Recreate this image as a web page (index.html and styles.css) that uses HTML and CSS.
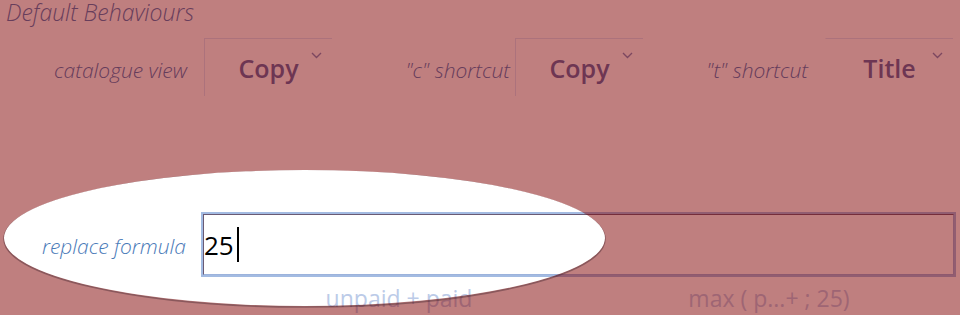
FILE: index.html
```html
<!DOCTYPE html>
<html lang="en">
<head>
<meta charset="utf-8">
<title>Default Behaviours</title>
<link rel="stylesheet" href="styles.css">
</head>
<body>
<div class="page">
  <h2 class="section-title">Default Behaviours</h2>

  <div class="defaults">
    <label class="lbl">catalogue view</label>
    <div class="select">
      <span class="value">Copy</span>
      <svg class="chev" width="11" height="7" viewBox="0 0 11 7"><path d="M1 1l4.5 4.5L10 1" fill="none" stroke="currentColor" stroke-width="1.4"/></svg>
    </div>
    <label class="lbl lbl-tight">"c" shortcut</label>
    <div class="select">
      <span class="value">Copy</span>
      <svg class="chev" width="11" height="7" viewBox="0 0 11 7"><path d="M1 1l4.5 4.5L10 1" fill="none" stroke="currentColor" stroke-width="1.4"/></svg>
    </div>
    <label class="lbl">"t" shortcut</label>
    <div class="select select-noleft">
      <span class="value">Title</span>
      <svg class="chev" width="11" height="7" viewBox="0 0 11 7"><path d="M1 1l4.5 4.5L10 1" fill="none" stroke="currentColor" stroke-width="1.4"/></svg>
    </div>
  </div>

  <div class="formula-row">
    <label class="lbl">replace formula</label>
    <div class="input"><span class="input-text">25</span><span class="caret"></span></div>
  </div>

  <div class="hints">
    <span class="hint">unpaid + paid</span>
    <span class="hint">max ( p...+ ; 25)</span>
  </div>

  <svg class="spotlight" width="960" height="315" viewBox="0 0 960 315">
    <defs>
      <clipPath id="outside">
        <path clip-rule="evenodd" d="M0 0H960V315H0Z M4 238A300.5 68 0 1 0 605 238A300.5 68 0 1 0 4 238Z"/>
      </clipPath>
    </defs>
    <path fill="rgba(128,0,0,0.5)" fill-rule="evenodd" d="M0 0H960V315H0Z M4 238A300.5 68 0 1 0 605 238A300.5 68 0 1 0 4 238Z"/>
    <ellipse cx="304.5" cy="239" rx="300.5" ry="68" fill="none" stroke="rgba(60,30,40,0.4)" stroke-width="1.6" clip-path="url(#outside)"/>
  </svg>
</div>
</body>
</html>
```

FILE: styles.css
```css
html, body {
  margin: 0;
  padding: 0;
  background: #ffffff;
}

.page {
  position: relative;
  width: 960px;
  height: 315px;
  overflow: hidden;
  font-family: "Open Sans", "Noto Sans", sans-serif;
}

.section-title {
  margin: 0;
  padding-left: 6px;
  font-size: 23px;
  line-height: 24px;
  font-weight: 300;
  font-style: italic;
  color: #4f7db8;
}

.defaults {
  margin-top: 14px;
  display: grid;
  grid-template-columns: 204px 128px 183px 128px 182px 128px;
  align-items: baseline;
}

.lbl {
  font-size: 21px;
  font-weight: 300;
  font-style: italic;
  color: #4a7ab8;
  text-align: right;
  padding-right: 17px;
  white-space: nowrap;
}

.lbl-tight {
  padding-right: 5px;
}

.select {
  position: relative;
  height: 58px;
  box-sizing: border-box;
  border-top: 1px solid #d8e4f8;
  border-left: 1px solid #d8e4f8;
  display: flex;
  align-items: center;
  justify-content: center;
}

.select-noleft {
  border-left-color: transparent;
}

.value {
  font-size: 25px;
  font-weight: 600;
  color: #5a6ca6;
}

.chev {
  position: absolute;
  right: 10px;
  top: 13px;
  color: #7a8fc0;
}

.formula-row {
  margin-top: 118px;
  display: grid;
  grid-template-columns: 203px 751px;
  align-items: center;
}

.formula-row .lbl {
  padding-top: 2px;
}

.input {
  height: 61px;
  box-sizing: border-box;
  border: 1px solid #9cb3dc;
  border-top-color: #6a5a74;
  border-left-color: #6a5a74;
  box-shadow: 0 0 0 2px #a3bbe2;
  display: flex;
  align-items: center;
  padding-left: 0;
}

.input-text {
  font-size: 26px;
  color: #000000;
}

.caret {
  display: inline-block;
  width: 2px;
  height: 35px;
  margin-left: 3px;
  background: #000000;
}

.hints {
  margin-top: 10px;
  margin-left: 214px;
  width: 740px;
  display: grid;
  grid-template-columns: 1fr 1fr;
  text-align: center;
  font-size: 23px;
  line-height: 27px;
  color: #bccbe8;
}

.spotlight {
  position: absolute;
  left: 0;
  top: 0;
  pointer-events: none;
}
```
